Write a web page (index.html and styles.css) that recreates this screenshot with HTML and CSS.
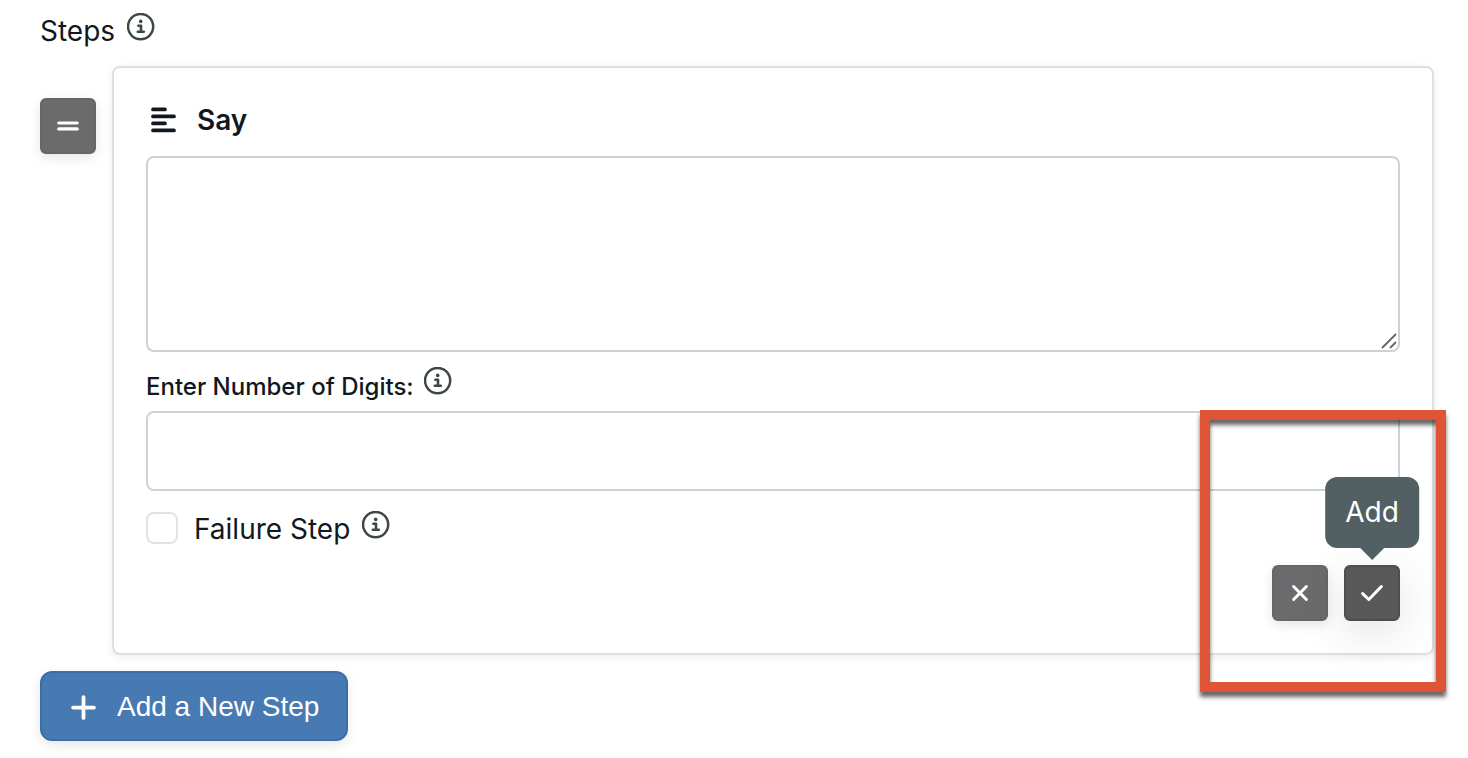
FILE: index.html
```html
<!DOCTYPE html>
<html lang="en">
<head>
<meta charset="utf-8">
<meta name="viewport" content="width=device-width, initial-scale=1">
<title>Steps</title>
<link rel="stylesheet" href="styles.css">
</head>
<body>
<svg class="sprite" aria-hidden="true">
  <symbol id="info" viewBox="0 0 28 28">
    <circle cx="13.6" cy="13.6" r="12.6" fill="none" stroke="currentColor" stroke-width="2.5"/>
    <circle cx="13.7" cy="8.4" r="1.8" fill="currentColor"/>
    <path d="M11.4 12.8h2.6v5.8M10.8 18.7h6" fill="none" stroke="currentColor" stroke-width="2.6" stroke-linecap="round" stroke-linejoin="round"/>
  </symbol>
</svg>
<main class="page">
  <header class="heading">
    <span>Steps</span>
    <button class="info" type="button" aria-label="About steps"><svg><use href="#info"/></svg></button>
  </header>
  <div class="step">
    <button class="square" type="button" aria-label="Reorder step">
      <svg viewBox="0 0 24 24"><path d="M2.8 9h18.4M2.8 14.9h18.4" stroke="currentColor" stroke-width="3.2" stroke-linecap="round"/></svg>
    </button>
    <section class="card">
      <label class="title" for="say">
        <svg viewBox="0 0 26 26"><path d="M2 2.4h12M2 9.4h21M2 16.4h12M2 23.4h21" stroke="currentColor" stroke-width="3.7" stroke-linecap="round"/></svg>
        Say
      </label>
      <div class="message">
        <textarea class="field area" id="say"></textarea>
        <svg class="grip" viewBox="0 0 16 16" aria-hidden="true"><path d="M1 15L15 1M9 15l6-6" stroke="#666" stroke-width="1.8"/></svg>
      </div>
      <div class="row digits">
        <label for="digits">Enter Number of Digits:</label>
        <button class="info" type="button" aria-label="About digits"><svg><use href="#info"/></svg></button>
      </div>
      <input class="field" id="digits" type="text">
      <div class="row failure">
        <input class="check" id="failure" type="checkbox">
        <label for="failure">Failure Step</label>
        <button class="info" type="button" aria-label="About failure step"><svg><use href="#info"/></svg></button>
      </div>
      <div class="actions">
        <button class="square" type="button" aria-label="Cancel">
          <svg viewBox="0 0 24 24"><path d="M5 5l14 14M19 5L5 19" stroke="currentColor" stroke-width="3.2" stroke-linecap="round"/></svg>
        </button>
        <div class="tipped">
          <button class="square dark" type="button" aria-describedby="tip" aria-label="Confirm">
            <svg viewBox="0 0 24 24"><path d="M2.6 12.6l6.2 5.9L21.4 5.5" fill="none" stroke="currentColor" stroke-width="3" stroke-linecap="round" stroke-linejoin="round"/></svg>
          </button>
          <span class="tooltip" id="tip" role="tooltip">Add</span>
        </div>
        <div class="highlight"></div>
      </div>
    </section>
  </div>
  <button class="add" type="button">
    <svg viewBox="0 0 24 24"><path d="M12 2v20M2 12h20" stroke="currentColor" stroke-width="3.6" stroke-linecap="round"/></svg>
    Add a New Step
  </button>
</main>
</body>
</html>
```
FILE: styles.css
```css
* { box-sizing: border-box; }
body {
  margin: 0;
  background: #fff;
  color: #111820;
  font-family: Inter, "Liberation Sans", sans-serif;
  font-size: 28px;
  line-height: 36px;
}
button { font: inherit; cursor: pointer; }
.sprite { position: absolute; width: 0; height: 0; }
.page { padding: 12px 34px 16px 40px; }
.heading { display: flex; gap: 12px; height: 54px; padding-top: 1px; }
.info {
  width: 28px;
  height: 28px;
  padding: 0;
  border: 0;
  background: none;
  color: #3b4748;
}
.info svg { display: block; width: 28px; height: 28px; }
.step { display: flex; gap: 16px; }
.step > .square { margin-top: 32px; }
.square {
  display: grid;
  place-items: center;
  flex: none;
  width: 56px;
  height: 56px;
  padding: 0;
  border: 2px solid #666667;
  border-radius: 6px;
  background: #6b6b6d;
  color: #fff;
  box-shadow: 0 4px 12px rgba(0, 0, 0, 0.1);
}
.square svg { width: 24px; height: 24px; }
.actions > .square svg { width: 22px; height: 22px; }
.dark {
  border-color: #4d4d4d;
  background: #585858;
  box-shadow: 0 12px 48px rgba(0, 0, 0, 0.12);
}
.card {
  flex: 1;
  min-width: 0;
  padding: 32px;
  border: 2px solid #dedfe0;
  border-radius: 8px;
  box-shadow: 0 2px 8px rgba(0, 0, 0, 0.08);
}
.title {
  display: flex;
  align-items: center;
  gap: 20px;
  height: 56px;
  padding: 0 0 16px 5px;
  font-weight: 600;
}
.title svg { width: 26px; height: 26px; }
.message { position: relative; }
.field {
  display: block;
  width: 100%;
  height: 80px;
  padding: 12px 16px;
  border: 2px solid #cdd2d9;
  border-radius: 8px;
  background: #fff;
  font: inherit;
}
.area { height: 196px; resize: none; }
.grip { position: absolute; right: 3px; bottom: 3px; width: 16px; height: 16px; }
.row { display: flex; }
.digits {
  gap: 10px;
  height: 59px;
  padding-top: 15px;
  font-size: 24px;
  font-weight: 500;
}
.digits label { padding-top: 2px; }
.failure { gap: 12px; padding-top: 20px; height: 74px; }
.check {
  appearance: none;
  width: 32px;
  height: 32px;
  margin: 1px 4px 0 0;
  border: 2px solid #dfe2e6;
  border-radius: 8px;
  background: #fff;
}
.actions {
  position: relative;
  display: flex;
  justify-content: flex-end;
  gap: 16px;
}
.tipped { position: relative; }
.tooltip {
  position: absolute;
  bottom: 73px;
  left: 50%;
  transform: translateX(-50%);
  padding: 17px 20px 18px;
  border-radius: 12px;
  background: #526064;
  color: #fff;
}
.tooltip::after {
  content: "";
  position: absolute;
  top: 100%;
  left: 50%;
  margin-left: -12px;
  border: 12px solid transparent;
  border-top-color: #526064;
  border-bottom: 0;
}
.highlight {
  position: absolute;
  top: -155px;
  right: -46px;
  bottom: -71px;
  width: 246px;
  border: 10px solid #df5434;
  filter: drop-shadow(0 5px 2px rgba(0, 0, 0, 0.6));
  pointer-events: none;
}
.add {
  display: flex;
  align-items: center;
  gap: 21px;
  height: 70px;
  margin-top: 16px;
  padding: 2px 27px 0 29px;
  border: 2px solid #3d6da6;
  border-radius: 12px;
  background: #477ab3;
  color: #fff;
  font-family: "Liberation Sans", sans-serif;
  box-shadow: 0 4px 12px rgba(0, 0, 0, 0.1);
}
.add svg { width: 25px; height: 25px; }
```
